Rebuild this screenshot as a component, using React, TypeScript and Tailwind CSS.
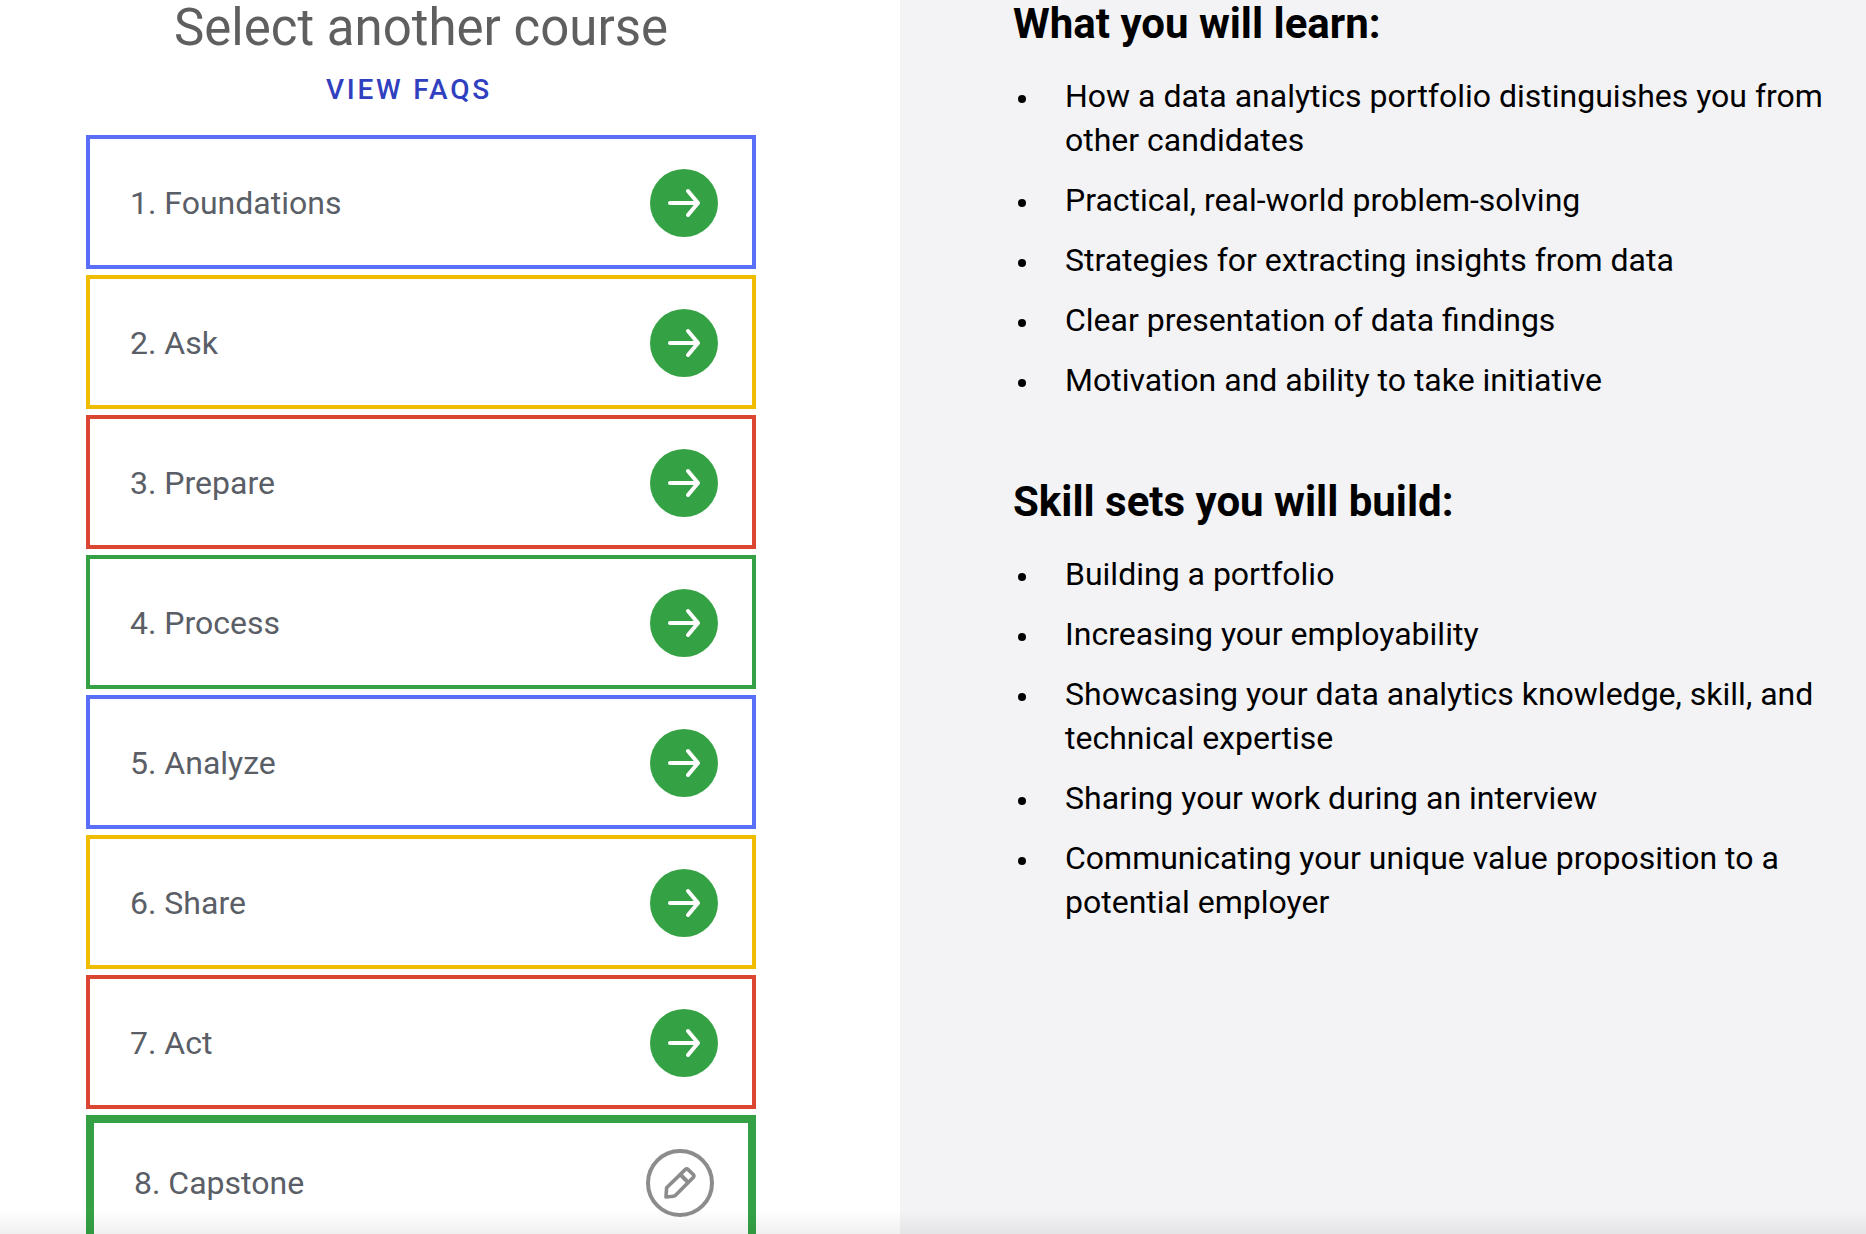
type Course = { title: string; border: string };

const courses: Course[] = [
  { title: "1. Foundations", border: "border-[#5a6ff9]" },
  { title: "2. Ask", border: "border-[#f0bc00]" },
  { title: "3. Prepare", border: "border-[#db4632]" },
  { title: "4. Process", border: "border-[#34a244]" },
  { title: "5. Analyze", border: "border-[#5a6ff9]" },
  { title: "6. Share", border: "border-[#f0bc00]" },
  { title: "7. Act", border: "border-[#db4632]" },
];

const learn = [
  "How a data analytics portfolio distinguishes you from other candidates",
  "Practical, real-world problem-solving",
  "Strategies for extracting insights from data",
  "Clear presentation of data findings",
  "Motivation and ability to take initiative",
];

const skills = [
  "Building a portfolio",
  "Increasing your employability",
  "Showcasing your data analytics knowledge, skill, and technical expertise",
  "Sharing your work during an interview",
  "Communicating your unique value proposition to a potential employer",
];

function ArrowIcon() {
  return (
    <svg viewBox="0 0 68 68" className="size-[68px] shrink-0" aria-hidden="true">
      <circle cx="34" cy="34" r="34" fill="#34a244" />
      <path
        d="M20 34H47M38 22L48 34L38 46"
        fill="none"
        stroke="#fff"
        strokeWidth="4"
        strokeLinecap="round"
        strokeLinejoin="round"
      />
    </svg>
  );
}

function PencilIcon() {
  return (
    <svg
      viewBox="0 0 68 68"
      className="size-[68px] shrink-0"
      fill="none"
      stroke="#8c8c8c"
      strokeWidth="4"
      strokeLinejoin="round"
      aria-hidden="true"
    >
      <circle cx="34" cy="34" r="32" />
      <path
        d="M20 48L20.6 38.8L39.2 20.6Q40.7 19.2 42.2 20.6L47.2 25.5Q48.6 27 47.2 28.5L29.3 46.4Q28.6 47.2 27.6 47.3Z"
        strokeWidth="3.6"
      />
      <path d="M34.3 25.5L42.3 33.7" />
    </svg>
  );
}

function Section({ title, items }: { title: string; items: string[] }) {
  return (
    <section>
      <h2 className="text-[42px] leading-12 font-bold">{title}</h2>
      <ul className="mt-[26px] flex flex-col gap-4 text-[32px] leading-[44px]">
        {items.map((item) => (
          <li key={item} className="flex">
            <span className="mt-[21px] mr-[39px] ml-[5px] size-2 shrink-0 rounded-full bg-black" />
            <span>{item}</span>
          </li>
        ))}
      </ul>
    </section>
  );
}

export default function App() {
  return (
    <div className="relative grid h-screen grid-cols-[900fr_966fr] overflow-hidden bg-white font-['Roboto',sans-serif]">
      <nav className="pr-36 pl-[86px]" aria-label="Courses">
        <h1 className="text-center text-[51px] leading-14 text-[#5f5f5f]">
          Select another course
        </h1>
        <div className="mt-[17px] flex justify-center pr-6">
          <a href="#faqs" className="text-[28px] leading-[34px] font-medium tracking-widest text-[#3040bf]">
            VIEW FAQS
          </a>
        </div>
        <div className="mt-7 flex flex-col gap-1.5 text-[32px] leading-10 text-[#5a5e66]">
          {courses.map(({ title, border }) => (
            <button
              key={title}
              type="button"
              className={`flex items-center justify-between border-4 pt-[30px] pr-[34px] pb-7 pl-10 text-left ${border}`}
            >
              {title}
              <ArrowIcon />
            </button>
          ))}
          <button
            type="button"
            aria-current="page"
            className="flex items-center justify-between border-8 border-[#34a244] pt-[26px] pr-[34px] pb-7 pl-10 text-left"
          >
            8. Capstone
            <PencilIcon />
          </button>
        </div>
      </nav>
      <main className="flex flex-col gap-[76px] bg-[#f3f3f5] pr-8 pl-[113px] text-black">
        <Section title="What you will learn:" items={learn} />
        <Section title="Skill sets you will build:" items={skills} />
      </main>
      <div className="pointer-events-none absolute inset-x-0 bottom-0 h-6 bg-linear-to-b from-transparent to-black/6" />
    </div>
  );
}
